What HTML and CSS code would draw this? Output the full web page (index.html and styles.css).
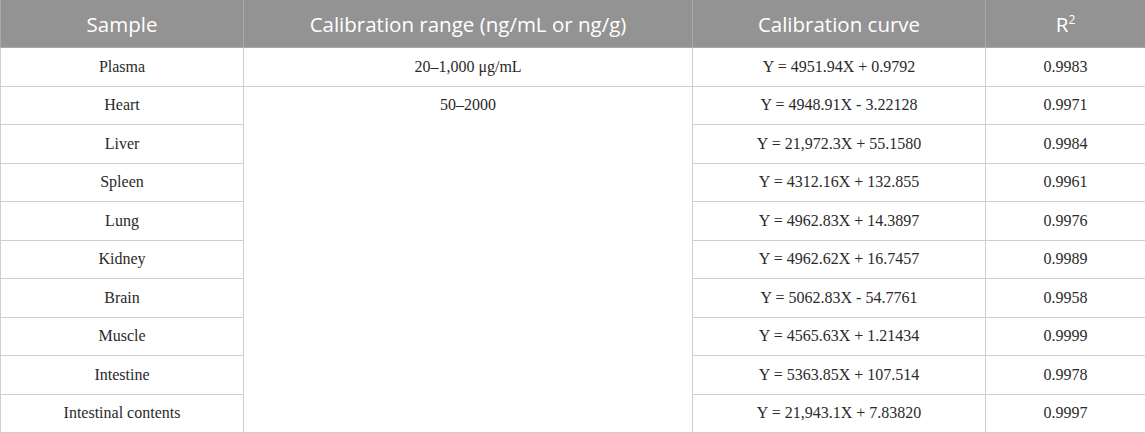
FILE: index.html
```html
<!DOCTYPE html>
<html>
<head>
<meta charset="utf-8">
<link rel="stylesheet" href="styles.css">
</head>
<body>
<table class="data">
  <colgroup>
    <col class="c1"><col class="c2"><col class="c3"><col class="c4">
  </colgroup>
  <thead>
    <tr>
      <th>Sample</th>
      <th>Calibration range (ng/mL or ng/g)</th>
      <th>Calibration curve</th>
      <th>R<sup>2</sup></th>
    </tr>
  </thead>
  <tbody>
    <tr><td>Plasma</td><td>20–1,000 μg/mL</td><td>Y = 4951.94X + 0.9792</td><td>0.9983</td></tr>
    <tr><td>Heart</td><td rowspan="9" class="top">50–2000</td><td>Y = 4948.91X - 3.22128</td><td>0.9971</td></tr>
    <tr><td>Liver</td><td>Y = 21,972.3X + 55.1580</td><td>0.9984</td></tr>
    <tr><td>Spleen</td><td>Y = 4312.16X + 132.855</td><td>0.9961</td></tr>
    <tr><td>Lung</td><td>Y = 4962.83X + 14.3897</td><td>0.9976</td></tr>
    <tr><td>Kidney</td><td>Y = 4962.62X + 16.7457</td><td>0.9989</td></tr>
    <tr><td>Brain</td><td>Y = 5062.83X - 54.7761</td><td>0.9958</td></tr>
    <tr><td>Muscle</td><td>Y = 4565.63X + 1.21434</td><td>0.9999</td></tr>
    <tr><td>Intestine</td><td>Y = 5363.85X + 107.514</td><td>0.9978</td></tr>
    <tr><td>Intestinal contents</td><td>Y = 21,943.1X + 7.83820</td><td>0.9997</td></tr>
  </tbody>
</table>
</body>
</html>
```
FILE: styles.css
```css
html, body {
  margin: 0;
  padding: 0;
  background: #ffffff;
}
.data {
  width: 1145px;
  border-collapse: collapse;
  table-layout: fixed;
}
.c1 { width: 243px; }
.c2 { width: 449px; }
.c3 { width: 293px; }
.c4 { width: 160px; }
.data th {
  background: #939393;
  color: #ffffff;
  font-family: "Open Sans", "Noto Sans", sans-serif;
  font-weight: 400;
  font-size: 20.5px;
  height: 47px;
  padding: 0 6px;
  border: 1px solid #a9a9a9;
  border-top: none;
  text-align: center;
  vertical-align: middle;
}
.data th sup {
  font-size: 12px;
  vertical-align: 8px;
  line-height: 0;
}
.data td {
  font-family: "Liberation Serif", "Times New Roman", serif;
  font-size: 16px;
  color: #2a2a2a;
  height: 37.5px;
  padding: 0 6px;
  border: 1.5px solid #cfcfcf;
  text-align: center;
  vertical-align: middle;
}
.data td.top {
  vertical-align: top;
  padding-top: 9px;
}
```
